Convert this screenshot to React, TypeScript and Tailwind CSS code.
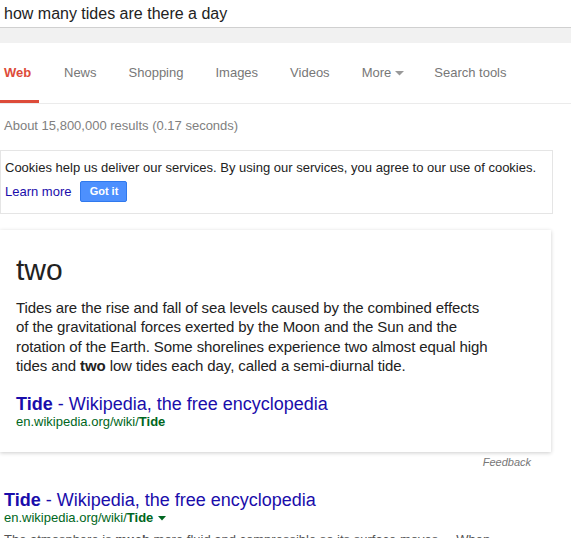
import React from 'react';

const tabs = ["News", "Shopping", "Images", "Videos"];

const App = () => {
  return (
    <div className="w-[571px] h-[538px] overflow-hidden bg-white font-['Liberation_Sans',Arial,sans-serif]">
      {/* search query */}
      <div className="h-[28px] border-b border-[#d0d0d0] pl-1 flex items-center text-[16px] text-[#222]">
        how many tides are there a day
      </div>
      <div className="h-[15px] bg-[#f1f1f1]"></div>

      {/* tabs */}
      <div className="h-[61px] border-b border-[#ebebeb] flex items-stretch text-[13px] text-[#777]">
        <div className="w-[39px] pl-1 flex items-center border-b-[3px] border-[#dd4b39] text-[#dd4b39] font-bold pt-[2px]">
          Web
        </div>
        <div className="flex items-center gap-8 ml-[25px]">
          {tabs.map((t) => (
            <span key={t}>{t}</span>
          ))}
          <span className="flex items-center">
            More
            <svg width="9" height="5" viewBox="0 0 9 5" className="ml-[4px]">
              <path d="M0 0 L9 0 L4.5 4.5 Z" fill="#999" />
            </svg>
          </span>
          <span className="ml-[-2px]">Search tools</span>
        </div>
      </div>

      <div className="pl-1 mt-[14px] text-[13px] leading-4 text-[#808080]">
        About 15,800,000 results (0.17 seconds)
      </div>

      {/* cookie notice */}
      <div className="mt-4 w-[553px] h-[64px] border border-[#e5e5e5] pl-1 pt-[9px]">
        <div className="text-[13px] leading-4 text-[#222]">
          Cookies help us deliver our services. By using our services, you agree to our use of cookies.
        </div>
        <div className="mt-[5px] flex items-center">
          <span className="text-[13px] text-[#1a0dab]">Learn more</span>
          <span className="ml-[9px] w-[47px] h-[21px] flex items-center justify-center rounded-[2px] bg-[#4d90fe] border border-[#3079ed] text-white text-[11px] font-bold">
            Got it
          </span>
        </div>
      </div>

      {/* answer card */}
      <div className="mt-4 w-[551px] bg-white shadow-[0_1px_4px_rgba(0,0,0,0.2)] pl-4 pt-5 pb-[22px]">
        <div className="text-[30px] leading-[40px] text-[#222]">two</div>
        <p className="mt-2 w-[472px] text-[15px] tracking-[-0.1px] leading-[19.3px] text-[#222]">
          Tides are the rise and fall of sea levels caused by the combined effects of the gravitational forces exerted by the Moon and the Sun and the rotation of the Earth. Some shorelines experience two almost equal high tides and <b>two</b> low tides each day, called a semi-diurnal tide.
        </p>
        <div className="mt-[19px] text-[18px] leading-5 text-[#1a0dab]">
          <b>Tide</b> - Wikipedia, the free encyclopedia
        </div>
        <div className="text-[13px] leading-4 text-[#006621]">
          en.wikipedia.org/wiki/<b>Tide</b>
        </div>
      </div>
      <div className="w-[531px] mt-[3px] text-right text-[11px] leading-[14px] italic text-[#777]">
        Feedback
      </div>

      {/* first organic result */}
      <div className="pl-1 mt-[21px]">
        <div className="text-[18px] leading-5 text-[#1a0dab]">
          <b>Tide</b> - Wikipedia, the free encyclopedia
        </div>
        <div className="flex items-center text-[13px] leading-4 text-[#006621]">
          <span>
            en.wikipedia.org/wiki/<b>Tide</b>
          </span>
          <svg width="8" height="5" viewBox="0 0 8 5" className="ml-[5px]">
            <path d="M0 0 L8 0 L4 4.5 Z" fill="#006621" />
          </svg>
        </div>
        <div className="mt-[5px] text-[13px] leading-[18px] text-[#545454] whitespace-nowrap">
          The atmosphere is <b>much</b> more fluid and compressible so its surface moves ... When
        </div>
      </div>
    </div>
  );
};

export default App;
